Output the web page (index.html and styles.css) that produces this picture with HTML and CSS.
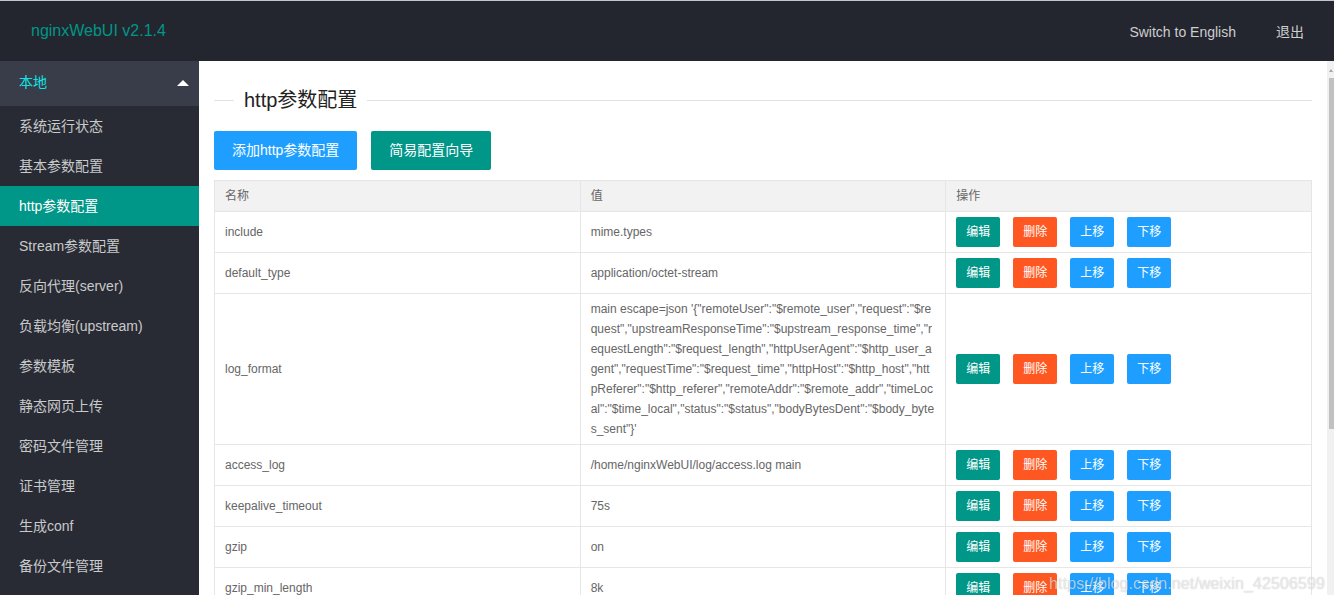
FILE: index.html
```html
<!DOCTYPE html>
<html lang="zh-CN">
<head>
<meta charset="utf-8">
<title>nginxWebUI</title>
<link rel="stylesheet" href="styles.css">
</head>
<body>
<div class="header">
  <div class="logo">nginxWebUI v2.1.4</div>
  <div class="top-nav">
    <a class="top-link">Switch to English</a>
    <a class="top-link">退出</a>
  </div>
</div>
<div class="layout">
  <div class="side">
    <div class="side-group">
      <span class="group-title">本地</span>
      <span class="arrow-up"></span>
    </div>
    <a class="side-item">系统运行状态</a>
    <a class="side-item">基本参数配置</a>
    <a class="side-item active">http参数配置</a>
    <a class="side-item">Stream参数配置</a>
    <a class="side-item">反向代理(server)</a>
    <a class="side-item">负载均衡(upstream)</a>
    <a class="side-item">参数模板</a>
    <a class="side-item">静态网页上传</a>
    <a class="side-item">密码文件管理</a>
    <a class="side-item">证书管理</a>
    <a class="side-item">生成conf</a>
    <a class="side-item">备份文件管理</a>
  </div>
  <div class="main">
    <div class="content">
      <div class="title">
        <span class="title-line short"></span>
        <span class="title-text">http参数配置</span>
        <span class="title-line"></span>
      </div>
      <div class="toolbar">
        <button class="btn blue">添加http参数配置</button>
        <button class="btn green">简易配置向导</button>
      </div>
      <table class="grid">
        <thead>
          <tr><th>名称</th><th>值</th><th>操作</th></tr>
        </thead>
        <tbody>
          <tr><td>include</td><td>mime.types</td><td><div class="ops"><button class="sbtn green">编辑</button><button class="sbtn red">删除</button><button class="sbtn blue">上移</button><button class="sbtn blue">下移</button></div></td></tr>
          <tr><td>default_type</td><td>application/octet-stream</td><td><div class="ops"><button class="sbtn green">编辑</button><button class="sbtn red">删除</button><button class="sbtn blue">上移</button><button class="sbtn blue">下移</button></div></td></tr>
          <tr><td>log_format</td><td class="wrap">main escape=json '{"remoteUser":"$remote_user","request":"$request","upstreamResponseTime":"$upstream_response_time","requestLength":"$request_length","httpUserAgent":"$http_user_agent","requestTime":"$request_time","httpHost":"$http_host","httpReferer":"$http_referer","remoteAddr":"$remote_addr","timeLocal":"$time_local","status":"$status","bodyBytesDent":"$body_bytes_sent"}'</td><td><div class="ops"><button class="sbtn green">编辑</button><button class="sbtn red">删除</button><button class="sbtn blue">上移</button><button class="sbtn blue">下移</button></div></td></tr>
          <tr><td>access_log</td><td>/home/nginxWebUI/log/access.log main</td><td><div class="ops"><button class="sbtn green">编辑</button><button class="sbtn red">删除</button><button class="sbtn blue">上移</button><button class="sbtn blue">下移</button></div></td></tr>
          <tr><td>keepalive_timeout</td><td>75s</td><td><div class="ops"><button class="sbtn green">编辑</button><button class="sbtn red">删除</button><button class="sbtn blue">上移</button><button class="sbtn blue">下移</button></div></td></tr>
          <tr><td>gzip</td><td>on</td><td><div class="ops"><button class="sbtn green">编辑</button><button class="sbtn red">删除</button><button class="sbtn blue">上移</button><button class="sbtn blue">下移</button></div></td></tr>
          <tr><td>gzip_min_length</td><td>8k</td><td><div class="ops"><button class="sbtn green">编辑</button><button class="sbtn red">删除</button><button class="sbtn blue">上移</button><button class="sbtn blue">下移</button></div></td></tr>
        </tbody>
      </table>
    </div>
    <div class="scrollbar">
      <span class="sb-arrow"></span>
      <span class="sb-thumb"></span>
    </div>
  </div>
</div>
<div class="watermark">https://blog.csdn.net/weixin_42506599</div>
</body>
</html>
```

FILE: styles.css
```css
html, body {
  margin: 0;
  padding: 0;
  height: 595px;
  overflow: hidden;
}
body {
  font-family: "Liberation Sans", Arial, "Noto Sans CJK SC", sans-serif;
  font-size: 14px;
  color: #333;
  background: #fff;
  position: relative;
}
.header {
  height: 60px;
  border-top: 1px solid #c4c5c8;
  background: #23262e;
  display: flex;
  align-items: center;
  justify-content: space-between;
}
.logo {
  padding-left: 31px;
  font-size: 16px;
  color: #009688;
}
.top-nav {
  display: flex;
  align-items: center;
  gap: 40px;
  padding-right: 30px;
  margin-top: 1px;
}
.top-link {
  display: block;
  height: 20px;
  line-height: 20px;
  color: rgba(255, 255, 255, 0.78);
  font-size: 14px;
}
.layout {
  display: flex;
  height: 534px;
}
.side {
  width: 199px;
  flex: none;
  background: #282b33;
  display: flex;
  flex-direction: column;
  overflow: hidden;
}
.side-group {
  height: 45px;
  flex: none;
  background: #393d49;
  display: flex;
  align-items: center;
  justify-content: space-between;
  padding: 0 10px 0 19px;
}
.group-title {
  display: block;
  height: 20px;
  line-height: 20px;
  margin-top: -3px;
  color: #0ee6e6;
  font-size: 14px;
}
.arrow-up {
  width: 0;
  height: 0;
  border-left: 6px solid transparent;
  border-right: 6px solid transparent;
  border-bottom: 6px solid #fff;
  margin-top: -2px;
}
.side-item {
  height: 40px;
  flex: none;
  line-height: 40px;
  padding-left: 19px;
  color: rgba(255, 255, 255, 0.75);
  font-size: 14px;
}
.side-item.active {
  background: #009688;
  color: #fff;
}
.main {
  flex: 1;
  display: flex;
  min-width: 0;
}
.content {
  flex: 1;
  padding: 0 15px;
  overflow: hidden;
  min-width: 0;
}
.title {
  display: flex;
  align-items: center;
  height: 28px;
  margin-top: 25px;
}
.title-line {
  flex: 1;
  height: 1px;
  background: #e2e2e2;
}
.title-line.short {
  flex: none;
  width: 20px;
}
.title-text {
  font-size: 20px;
  color: #222;
  padding: 0 10px;
  line-height: 28px;
}
.toolbar {
  display: flex;
  gap: 14px;
  margin-top: 17px;
}
.btn {
  height: 39px;
  padding: 0 18px;
  border: none;
  border-radius: 2px;
  color: #fff;
  font-family: inherit;
  font-size: 14px;
  line-height: 39px;
}
.blue { background: #1e9fff; }
.green { background: #009688; }
.red { background: #ff5722; }
.grid {
  width: 100%;
  margin-top: 10px;
  border-collapse: collapse;
  table-layout: fixed;
  font-size: 12px;
  color: #666;
}
.grid th, .grid td {
  border: 1px solid #e6e6e6;
  padding: 5px 10px;
  line-height: 20px;
  text-align: left;
  font-weight: normal;
  vertical-align: middle;
}
.grid th {
  background: #f2f2f2;
}
.grid td.wrap {
  word-break: break-all;
}
.ops {
  display: flex;
  gap: 13px;
}
.sbtn {
  height: 30px;
  padding: 0 10px;
  border: none;
  border-radius: 2px;
  color: #fff;
  font-family: inherit;
  font-size: 12px;
  line-height: 30px;
}
.scrollbar {
  width: 7px;
  flex: none;
  background: #f1f1f1;
  display: flex;
  flex-direction: column;
  align-items: flex-end;
}
.sb-arrow {
  width: 0;
  height: 0;
  margin: 8px 1px 0 0;
  border-left: 2px solid transparent;
  border-right: 2px solid transparent;
  border-bottom: 3px solid #a3a3a3;
}
.sb-thumb {
  width: 5px;
  height: 351px;
  margin-top: 6px;
  background: #c1c1c1;
}
.watermark {
  position: absolute;
  right: 9px;
  bottom: 2px;
  font-size: 16px;
  color: rgba(255, 255, 255, 0.65);
  text-shadow: 0 0 1px rgba(0, 0, 0, 0.28);
  letter-spacing: 0.1px;
}
```
